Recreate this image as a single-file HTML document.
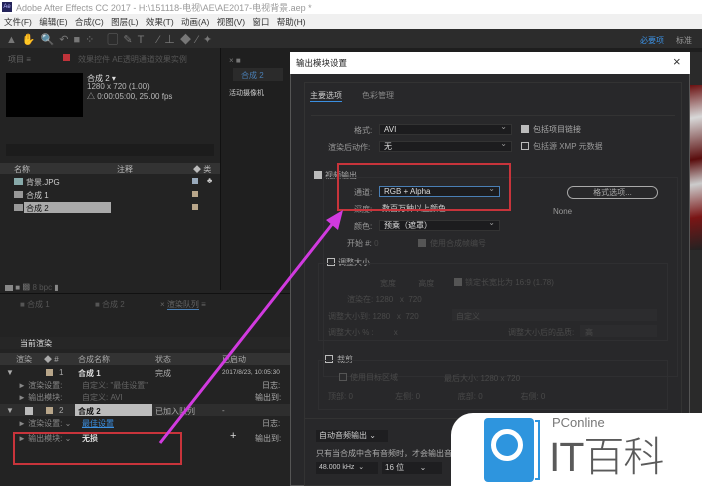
<!DOCTYPE html>
<html><head><meta charset="utf-8"><style>
*{margin:0;padding:0;box-sizing:border-box}
body{width:702px;height:486px;overflow:hidden;background:#1e1e1e;font-family:"Liberation Sans","Noto Sans CJK SC",sans-serif;font-size:8px;color:#aaa;position:relative}
.a{position:absolute;white-space:nowrap}
.w{color:#ddd}.d{color:#666}.dd{color:#4a4a4a}
.cb{position:absolute;width:8px;height:8px;border:1px solid #bbb;background:#2b2b2d}
.cb.on{background:#bbb}
.sel{position:absolute;height:11px;background:#1c1c1e;border:1px solid #333;color:#ddd;padding-left:4px;line-height:9px}
.sel:after{content:"⌄";position:absolute;right:4px;top:-3px;color:#999}
.sw{position:absolute;width:7px;height:7px;background:#b8a68a}
</style></head><body>
<div class="a" style="left:0;top:0;width:702px;height:14px;background:#fff"></div>
<div class="a" style="left:2px;top:2px;width:10px;height:10px;background:#23235a;color:#b9b9ff;font-size:6px;line-height:10px;text-align:center">Ae</div>
<div class="a" style="left:16px;top:1px;color:#999;font-size:9px">Adobe After Effects CC 2017 - H:\151118-电视\AE\AE2017-电视背景.aep *</div>
<div class="a" style="left:0;top:14px;width:702px;height:15px;background:#f0f0f0"></div>
<div class="a" style="left:4px;top:16px;color:#333;font-size:8.5px;word-spacing:5px">文件(F) 编辑(E) 合成(C) 图层(L) 效果(T) 动画(A) 视图(V) 窗口 帮助(H)</div>
<div class="a" style="left:0;top:29px;width:702px;height:19px;background:#2c2c2c"></div>
<div class="a" style="left:6px;top:31px;color:#777;font-size:11px;letter-spacing:5px">▲✋🔍↶■⁘ ▢✎T ⁄⊥◆⁄✦</div>
<div class="a" style="left:640px;top:35px;color:#3b8fe0;font-size:8px">必要项</div>
<div class="a" style="left:676px;top:35px;color:#999;font-size:8px">标准</div>
<div class="a" style="left:0;top:48px;width:220px;height:250px;background:#232323"></div>
<div class="a" style="left:8px;top:54px;color:#666">项目 ≡</div>
<div class="a" style="left:63px;top:54px;width:7px;height:7px;background:#c0333a"></div>
<div class="a" style="left:78px;top:54px;color:#555">效果控件 AE透明通道效果实例</div>
<div class="a" style="left:6px;top:73px;width:77px;height:44px;background:#000"></div>
<div class="a w" style="left:87px;top:73px">合成 2 ▾</div>
<div class="a" style="left:87px;top:82px;color:#bbb">1280 x 720 (1.00)</div>
<div class="a" style="left:87px;top:91px;color:#bbb">△ 0:00:05:00, 25.00 fps</div>
<div class="a" style="left:6px;top:144px;width:208px;height:12px;background:#1c1c1c"></div>
<div class="a" style="left:0;top:163px;width:220px;height:11px;background:#333"></div>
<div class="a" style="left:14px;top:164px;color:#bbb">名称</div>
<div class="a" style="left:117px;top:164px;color:#bbb">注释</div>
<div class="a" style="left:193px;top:164px;color:#bbb">◆ 类</div>
<div class="a" style="left:14px;top:178px;width:9px;height:7px;background:#8aa"></div><div class="a" style="left:26px;top:177px;color:#ccc">背景.JPG</div>
<div class="a" style="left:14px;top:191px;width:9px;height:7px;background:#999"></div><div class="a" style="left:26px;top:190px;color:#ccc">合成 1</div>
<div class="a" style="left:24px;top:202px;width:87px;height:11px;background:#aaa"></div>
<div class="a" style="left:14px;top:204px;width:9px;height:7px;background:#999"></div><div class="a" style="left:26px;top:203px;color:#111">合成 2</div>
<div class="a" style="left:192px;top:178px;width:6px;height:6px;background:#9ab"></div>
<div class="a" style="left:192px;top:191px;width:6px;height:6px;background:#b8a68a"></div>
<div class="a" style="left:192px;top:204px;width:6px;height:6px;background:#b8a68a"></div>
<div class="a" style="left:207px;top:176px;color:#ccc">♣</div>
<div class="a" style="left:220px;top:48px;width:70px;height:250px;background:#1f1f1f;border-left:1px solid #111"></div>
<div class="a" style="left:229px;top:56px;color:#777">× ■</div>
<div class="a" style="left:233px;top:68px;width:50px;height:13px;background:#2b2b2b;color:#4a7fb5;padding:2px 8px">合成 2</div>
<div class="a" style="left:229px;top:88px;color:#ccc;font-size:7px">活动摄像机</div>
<div class="a" style="left:0;top:290px;width:290px;height:196px;background:#232323"></div>
<div class="a" style="left:5px;top:282px;color:#888">▆ ■ ▩ <span style="color:#555">8 bpc</span> ▮</div>
<div class="a" style="left:0;top:293px;width:290px;height:1px;background:#111"></div>
<div class="a" style="left:20px;top:299px;color:#555">■ 合成 1</div>
<div class="a" style="left:95px;top:299px;color:#555">■ 合成 2</div>
<div class="a" style="left:160px;top:299px;color:#666">× <span style="border-bottom:1px solid #4a7fb5">渲染队列</span> ≡</div>
<div class="a" style="left:0;top:337px;width:290px;height:12px;background:#262626"></div>
<div class="a w" style="left:20px;top:338px">当前渲染</div>
<div class="a" style="left:0;top:353px;width:290px;height:12px;background:#333"></div>
<div class="a" style="left:16px;top:354px">渲染</div>
<div class="a" style="left:44px;top:354px">◆ #</div>
<div class="a" style="left:78px;top:354px">合成名称</div>
<div class="a" style="left:155px;top:354px">状态</div>
<div class="a" style="left:222px;top:354px">已启动</div>
<div class="a" style="left:6px;top:368px">▼</div>
<div class="sw" style="left:46px;top:369px"></div><div class="a" style="left:59px;top:368px">1</div>
<div class="a w" style="left:78px;top:368px;font-weight:bold">合成 1</div>
<div class="a" style="left:155px;top:368px">完成</div>
<div class="a" style="left:222px;top:369px;color:#bbb;font-size:6.5px">2017/8/23, 10:05:30</div>
<div class="a" style="left:18px;top:380px;color:#888">► 渲染设置:</div><div class="a d" style="left:82px;top:380px">自定义: "最佳设置"</div>
<div class="a" style="left:18px;top:392px;color:#888">► 输出模块:</div><div class="a d" style="left:82px;top:392px">自定义: AVI</div>
<div class="a" style="left:262px;top:380px">日志:</div>
<div class="a" style="left:255px;top:392px">输出到:</div>
<div class="a" style="left:0;top:404px;width:290px;height:12px;background:#2e2e2e"></div>
<div class="a" style="left:75px;top:404px;width:77px;height:12px;background:#bcbcbc"></div>
<div class="a" style="left:6px;top:406px">▼</div>
<div class="cb on" style="left:25px;top:407px"></div>
<div class="sw" style="left:46px;top:407px"></div><div class="a" style="left:59px;top:406px">2</div>
<div class="a" style="left:78px;top:406px;color:#111;font-weight:bold">合成 2</div>
<div class="a" style="left:155px;top:406px">已加入队列</div>
<div class="a" style="left:222px;top:406px">-</div>
<div class="a" style="left:18px;top:418px;color:#888">► 渲染设置: ⌄</div><div class="a" style="left:82px;top:418px;color:#3b8fe0;text-decoration:underline">最佳设置</div>
<div class="a" style="left:262px;top:418px">日志:</div>
<div class="a" style="left:18px;top:433px;color:#888">► 输出模块: ⌄</div><div class="a w" style="left:82px;top:433px;font-weight:bold">无损</div>
<div class="a" style="left:230px;top:430px;color:#ddd;font-size:11px">+</div>
<div class="a" style="left:255px;top:433px">输出到:</div>
<div class="a" style="left:13px;top:432px;width:169px;height:33px;border:2px solid #c8343b"></div>
<div class="a" style="left:690px;top:52px;width:12px;height:434px;background:#2a2a2a"></div>
<div class="a" style="left:690px;top:85px;width:12px;height:165px;background:linear-gradient(170deg,#6a1010 0%,#d8d8d8 20%,#5a0d0d 45%,#ccc 60%,#7a1515 80%,#222 100%)"></div>
<div class="a" style="left:290px;top:52px;width:400px;height:434px;background:#28282a;border:1px solid #555"></div>
<div class="a" style="left:290px;top:52px;width:400px;height:22px;background:#fff"></div>
<div class="a" style="left:296px;top:57px;color:#222;font-size:8.5px">输出模块设置</div>
<div class="a" style="left:673px;top:54px;color:#333;font-size:13px">×</div>
<div class="a" style="left:304px;top:82px;width:378px;height:404px;border:1px solid #333"></div>
<div class="a" style="left:310px;top:90px;color:#ccc;border-bottom:1px solid #3b8fe0">主要选项</div>
<div class="a" style="left:362px;top:90px;color:#888">色彩管理</div>
<div class="a" style="left:311px;top:115px;width:364px;height:45px;border-top:1px solid #333"></div>
<div class="a" style="left:354px;top:125px;color:#999">格式:</div>
<div class="sel" style="left:379px;top:124px;width:133px">AVI</div>
<div class="cb on" style="left:521px;top:125px"></div><div class="a" style="left:533px;top:124px;color:#aaa">包括项目链接</div>
<div class="a" style="left:328px;top:142px;color:#999">渲染后动作:</div>
<div class="sel" style="left:379px;top:141px;width:133px">无</div>
<div class="cb" style="left:521px;top:142px"></div><div class="a" style="left:533px;top:141px;color:#999">包括源 XMP 元数据</div>
<div class="cb on" style="left:314px;top:171px"></div><div class="a" style="left:325px;top:170px;color:#aaa">视频输出</div>
<div class="a" style="left:323px;top:177px;width:355px;height:200px;border:1px solid #2f2f31"></div>
<div class="a" style="left:354px;top:187px;color:#999">通道:</div>
<div class="sel" style="left:379px;top:186px;width:121px;border-color:#4a7fb5">RGB + Alpha</div>
<div class="a" style="left:567px;top:186px;width:91px;height:13px;border:1px solid #aaa;border-radius:7px;color:#aaa;text-align:center;line-height:11px">格式选项...</div>
<div class="a" style="left:354px;top:204px;color:#999">深度:</div>
<div class="a" style="left:382px;top:203px;color:#ccc">数百万种以上颜色</div>
<div class="a" style="left:553px;top:207px;color:#999">None</div>
<div class="a" style="left:354px;top:221px;color:#999">颜色:</div>
<div class="sel" style="left:379px;top:220px;width:121px">预乘（遮罩）</div>
<div class="a" style="left:347px;top:238px;color:#999">开始 #: <span class="dd">0</span></div>
<div class="cb" style="left:418px;top:239px;background:#555;border-color:#555"></div><div class="a dd" style="left:430px;top:238px">使用合成帧编号</div>
<div class="a" style="left:337px;top:163px;width:174px;height:48px;border:2px solid #c8343b"></div>
<div class="cb" style="left:327px;top:258px"></div><div class="a" style="left:338px;top:257px;color:#aaa">调整大小</div>
<div class="a" style="left:318px;top:263px;width:350px;height:78px;border:1px solid #2f2f31"></div>
<div class="a dd" style="left:380px;top:278px">宽度 &nbsp; &nbsp; &nbsp; &nbsp; &nbsp;高度</div>
<div class="cb" style="left:454px;top:278px;background:#555;border-color:#555"></div><div class="a dd" style="left:465px;top:277px">锁定长宽比为 16:9 (1.78)</div>
<div class="a dd" style="left:347px;top:294px">渲染在: 1280 &nbsp; x &nbsp;720</div>
<div class="a dd" style="left:328px;top:311px">调整大小到: 1280 &nbsp; x &nbsp;720</div>
<div class="a" style="left:452px;top:309px;width:205px;height:12px;background:#2c2c2e"></div>
<div class="a dd" style="left:456px;top:311px">自定义</div>
<div class="a dd" style="left:328px;top:327px">调整大小 % : &nbsp; &nbsp; &nbsp; &nbsp; x</div>
<div class="a dd" style="left:508px;top:327px">调整大小后的品质:</div>
<div class="a" style="left:580px;top:325px;width:77px;height:12px;background:#2c2c2e"></div>
<div class="a dd" style="left:585px;top:327px">高</div>
<div class="cb" style="left:325px;top:355px"></div><div class="a" style="left:337px;top:354px;color:#aaa">裁剪</div>
<div class="a" style="left:318px;top:360px;width:350px;height:50px;border:1px solid #2f2f31"></div>
<div class="cb" style="left:339px;top:373px;border-color:#555"></div><div class="a dd" style="left:350px;top:372px">使用目标区域</div>
<div class="a dd" style="left:444px;top:373px">最后大小: 1280 x 720</div>
<div class="a dd" style="left:328px;top:391px">顶部: 0 &nbsp; &nbsp; &nbsp; &nbsp; &nbsp; &nbsp; &nbsp; &nbsp; &nbsp; 左侧: 0 &nbsp; &nbsp; &nbsp; &nbsp; &nbsp; &nbsp; &nbsp; &nbsp; 底部: 0 &nbsp; &nbsp; &nbsp; &nbsp; &nbsp; &nbsp; &nbsp; &nbsp; 右侧: 0</div>
<div class="a" style="left:304px;top:418px;width:378px;height:1px;background:#333"></div>
<div class="a" style="left:316px;top:430px;width:72px;height:12px;background:#1e1e20;color:#ccc;padding-left:3px;line-height:12px">自动音频输出 ⌄</div>
<div class="a" style="left:316px;top:448px;color:#aaa">只有当合成中含有音频时，才会输出音频。</div>
<div class="a" style="left:316px;top:462px;width:62px;height:12px;background:#1e1e20;color:#ccc;padding-left:3px;line-height:12px;font-size:7px">48.000 kHz &nbsp;⌄</div>
<div class="a" style="left:382px;top:462px;width:60px;height:12px;background:#1e1e20;color:#ccc;padding-left:3px;line-height:12px">16 位 &nbsp; &nbsp; &nbsp; ⌄</div>
<svg class="a" style="left:0;top:0" width="702" height="486"><line x1="160" y1="443" x2="337" y2="218" stroke="#d13adf" stroke-width="3"/><polygon points="343,210 326,220 338,230" fill="#d13adf"/></svg>
<div class="a" style="left:451px;top:413px;width:251px;height:73px;background:#fff;border-top-left-radius:22px"></div>
<div class="a" style="left:484px;top:418px;width:50px;height:64px;background:#2e95de;border-radius:4px"></div>
<div class="a" style="left:491px;top:429px;width:32px;height:32px;border:5px solid #fff;border-radius:50%"></div>
<div class="a" style="left:535px;top:420px;width:5px;height:60px;border:2px solid #2e95de;border-left:none"></div>
<div class="a" style="left:552px;top:415px;color:#777;font-size:13px">PConline</div>
<div class="a" style="left:549px;top:432px;color:#5a5a5a;font-size:41px;line-height:50px;font-weight:300;letter-spacing:-1px">IT百科</div>
</body></html>
